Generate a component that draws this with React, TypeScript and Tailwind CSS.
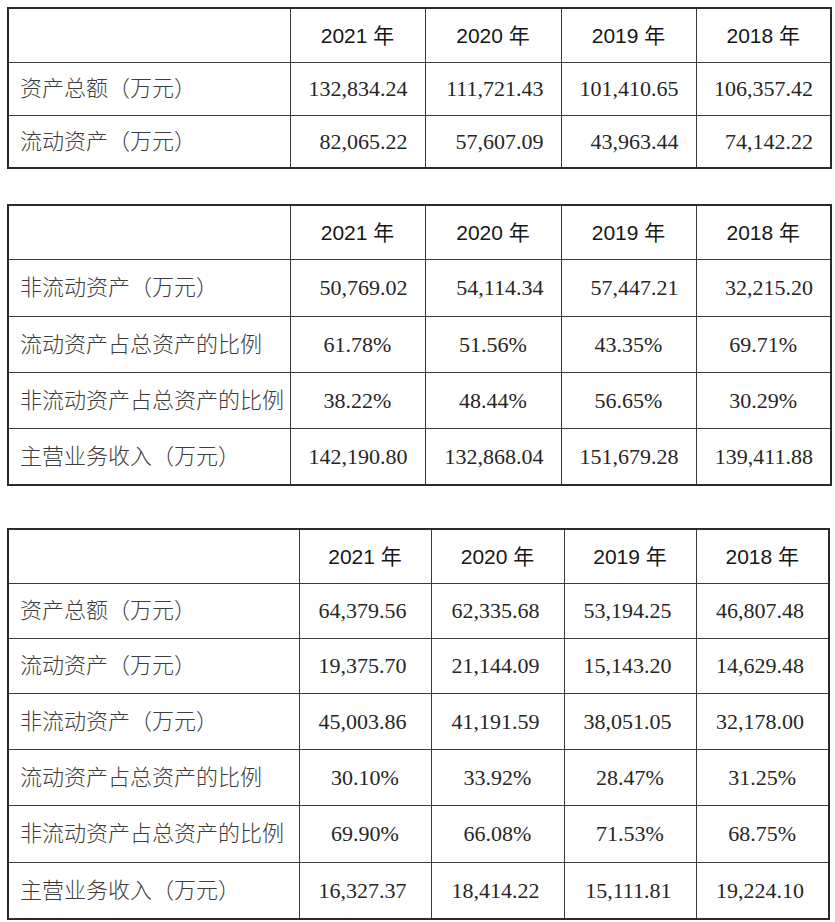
import React from 'react';

type Row = { label: string; values: string[]; h: string };

interface TableSpec {
  width: string;
  cols: string[];
  headH: string;
  numPad: string;
  rows: Row[];
  className?: string;
}

const years = ['2021 年', '2020 年', '2019 年', '2018 年'];

const tables: TableSpec[] = [
  {
    width: 'w-[823px]',
    cols: ['w-[282px]', 'w-[135px]', 'w-[136px]', 'w-[135px]', 'w-[135px]'],
    headH: 'h-[54px]',
    numPad: 'pr-[17px]',
    rows: [
      { label: '资产总额（万元）', h: 'h-[53px]', values: ['132,834.24', '111,721.43', '101,410.65', '106,357.42'] },
      { label: '流动资产（万元）', h: 'h-[53px]', values: ['82,065.22', '57,607.09', '43,963.44', '74,142.22'] },
    ],
  },
  {
    width: 'w-[823px]',
    cols: ['w-[282px]', 'w-[135px]', 'w-[136px]', 'w-[135px]', 'w-[135px]'],
    headH: 'h-[54px]',
    numPad: 'pr-[17px]',
    className: 'mt-[35px]',
    rows: [
      { label: '非流动资产（万元）', h: 'h-[57px]', values: ['50,769.02', '54,114.34', '57,447.21', '32,215.20'] },
      { label: '流动资产占总资产的比例', h: 'h-[56px]', values: ['61.78%', '51.56%', '43.35%', '69.71%'] },
      { label: '非流动资产占总资产的比例', h: 'h-[56px]', values: ['38.22%', '48.44%', '56.65%', '30.29%'] },
      { label: '主营业务收入（万元）', h: 'h-[57px]', values: ['142,190.80', '132,868.04', '151,679.28', '139,411.88'] },
    ],
  },
  {
    width: 'w-[821px]',
    cols: ['w-[291px]', 'w-[132px]', 'w-[133px]', 'w-[132px]', 'w-[133px]'],
    headH: 'h-[54px]',
    numPad: 'pr-[24px]',
    className: 'mt-[42px]',
    rows: [
      { label: '资产总额（万元）', h: 'h-[55px]', values: ['64,379.56', '62,335.68', '53,194.25', '46,807.48'] },
      { label: '流动资产（万元）', h: 'h-[55px]', values: ['19,375.70', '21,144.09', '15,143.20', '14,629.48'] },
      { label: '非流动资产（万元）', h: 'h-[56px]', values: ['45,003.86', '41,191.59', '38,051.05', '32,178.00'] },
      { label: '流动资产占总资产的比例', h: 'h-[56px]', values: ['30.10%', '33.92%', '28.47%', '31.25%'] },
      { label: '非流动资产占总资产的比例', h: 'h-[57px]', values: ['69.90%', '66.08%', '71.53%', '68.75%'] },
      { label: '主营业务收入（万元）', h: 'h-[57px]', values: ['16,327.37', '18,414.22', '15,111.81', '19,224.10'] },
    ],
  },
];

const cell = 'border border-[#3a3a3a] p-0 whitespace-nowrap';

const DataTable: React.FC<{ spec: TableSpec }> = ({ spec }) => (
  <table className={`table-fixed border-collapse border-2 border-[#2a2a2a] ${spec.width} ${spec.className ?? ''}`}>
    <colgroup>
      {spec.cols.map((c, i) => (
        <col key={i} className={c} />
      ))}
    </colgroup>
    <thead>
      <tr className={spec.headH}>
        <th className={cell} />
        {years.map(y => (
          <th
            key={y}
            className={`${cell} text-center text-[21px] font-normal text-[#161616] font-['Liberation_Sans','Noto_Sans_CJK_SC',sans-serif]`}
          >
            {y}
          </th>
        ))}
      </tr>
    </thead>
    <tbody>
      {spec.rows.map(r => (
        <tr key={r.label} className={r.h}>
          <td className={`${cell} pl-[11px] text-left text-[22px] font-light text-[#3c3c3c] font-['Liberation_Serif','Noto_Sans_CJK_SC',serif]`}>
            {r.label}
          </td>
          {r.values.map((v, j) => (
            <td
              key={j}
              className={`${cell} text-[22px] text-[#262626] font-['Liberation_Serif',serif] ${v.endsWith('%') ? 'text-center' : `text-right ${spec.numPad}`}`}
            >
              {v}
            </td>
          ))}
        </tr>
      ))}
    </tbody>
  </table>
);

export default function App() {
  return (
    <div className="min-h-[922px] w-[835px] bg-white pt-[7px] pl-[7px] flex flex-col">
      {tables.map((t, i) => (
        <DataTable key={i} spec={t} />
      ))}
    </div>
  );
}
